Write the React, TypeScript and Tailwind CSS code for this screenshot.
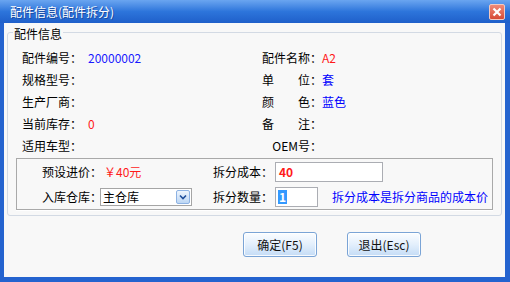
import React from 'react';

const Row = ({ label, value, valueClass = '' }: { label: string; value?: string; valueClass?: string }) => (
  <>
    <div className="flex items-center">{label}</div>
    <div className={`flex items-center ${valueClass}`}>{value}</div>
  </>
);

const Chevron = () => (
  <svg width="8" height="6" viewBox="0 0 8 6">
    <path d="M1 1.5 L4 4.5 L7 1.5" fill="none" stroke="#1f4e9a" strokeWidth="1.6" />
  </svg>
);

export default function App() {
  return (
    <div className="w-[510px] h-[282px] flex flex-col bg-[#2463cf] font-['Noto_Sans_CJK_SC',sans-serif] text-[12px] leading-[14px] text-black whitespace-nowrap select-none">
      {/* title bar */}
      <div className="h-[23px] flex items-center justify-between pl-[10px] pr-[5px] bg-linear-to-b from-[#6aa5f0] via-[#2d75db] to-[#1f5fca]">
        <span className="text-white [text-shadow:1px_1px_0_#1a4aa0]">配件信息(配件拆分)</span>
        <div className="w-[16px] h-[16px] rounded-[2px] border border-[#f3c9c0] bg-linear-to-b from-[#f08a78] to-[#d64a35] flex items-center justify-center">
          <svg width="10" height="10" viewBox="0 0 10 10">
            <path d="M1.5 1.5 L8.5 8.5 M8.5 1.5 L1.5 8.5" stroke="#fff" strokeWidth="2.2" />
          </svg>
        </div>
      </div>

      {/* body */}
      <div className="flex-1 ml-[4px] mr-[5px] mb-[5px] bg-[#f8f8f8] flex flex-col">
        <fieldset className="mt-[2px] mx-[3px] border border-[#d3dae4] rounded-[3px] px-[8px] pb-[5px]">
          <legend className="ml-[-3px] px-[1px] leading-[14px]">
            <span className="relative top-[2px]">配件信息</span>
          </legend>

          <div className="mt-[8px] pl-[6px] grid grid-cols-[66px_174px_60px_1fr] auto-rows-[22px]">
            <Row label="配件编号：" value="20000002" valueClass="text-[#1a1aff]" />
            <Row label="配件名称：" value="A2" valueClass="text-[#ff1a1a]" />
            <Row label="规格型号：" />
            <Row label="单　　位：" value="套" valueClass="text-[#0000ff]" />
            <Row label="生产厂商：" />
            <Row label="颜　　色：" value="蓝色" valueClass="text-[#0000ff]" />
            <Row label="当前库存：" value="0" valueClass="text-[#ff1a1a]" />
            <Row label="备　　注：" />
            <Row label="适用车型：" />
            <div className="flex items-center justify-end">OEM号：</div>
            <div />
          </div>

          <div className="mt-[1px] border border-[#a9a9a9] shadow-[0_1px_0_#ffffff] grid grid-cols-[58px_113px_62px_1fr] auto-rows-[22px] gap-y-[3px] pl-[25px] pt-[2px] pb-[1px]">
            <div className="flex items-center">预设进价：</div>
            <div className="flex items-center pl-[4px] text-[#ff1a1a]">￥40元</div>
            <div className="flex items-center">拆分成本：</div>
            <div className="flex items-center">
              <div className="w-[108px] h-[20px] border border-[#abadb3] bg-white flex items-center pl-[3px] font-bold text-[#ff1a1a]">40</div>
            </div>

            <div className="flex items-center">入库仓库：</div>
            <div className="flex items-center">
              <div className="w-[92px] h-[18px] border border-[#a5a5a5] bg-white flex items-center justify-between pl-[2px] pr-[1px]">
                <span>主仓库</span>
                <div className="w-[14px] h-[14px] rounded-[2px] border border-[#8db2e3] bg-linear-to-b from-[#eef5fd] to-[#bcd6f4] flex items-center justify-center">
                  <Chevron />
                </div>
              </div>
            </div>
            <div className="flex items-center">拆分数量：</div>
            <div className="flex items-center">
              <div className="w-[43px] h-[20px] border border-[#abadb3] bg-white flex items-center pl-[2px]">
                <span className="bg-[#3399ff] text-white font-bold px-[1px]">1</span>
              </div>
              <span className="ml-[14px] text-[#0000ff]">拆分成本是拆分商品的成本价</span>
            </div>
          </div>
        </fieldset>

        <div className="mt-[16px] pl-[239px] flex gap-[30px]">
          <button className="w-[74px] h-[25px] rounded-[3px] border border-[#7aa4d6] bg-linear-to-b from-[#fbfdff] via-[#e3effc] to-[#c4dcf6] shadow-[inset_0_0_0_1px_rgba(255,255,255,0.85)] flex items-center justify-center text-[#111]">
            确定(F5)
          </button>
          <button className="w-[74px] h-[25px] rounded-[3px] border border-[#7aa4d6] bg-linear-to-b from-[#fbfdff] via-[#e3effc] to-[#c4dcf6] shadow-[inset_0_0_0_1px_rgba(255,255,255,0.85)] flex items-center justify-center text-[#111]">
            退出(Esc)
          </button>
        </div>
      </div>
    </div>
  );
}
